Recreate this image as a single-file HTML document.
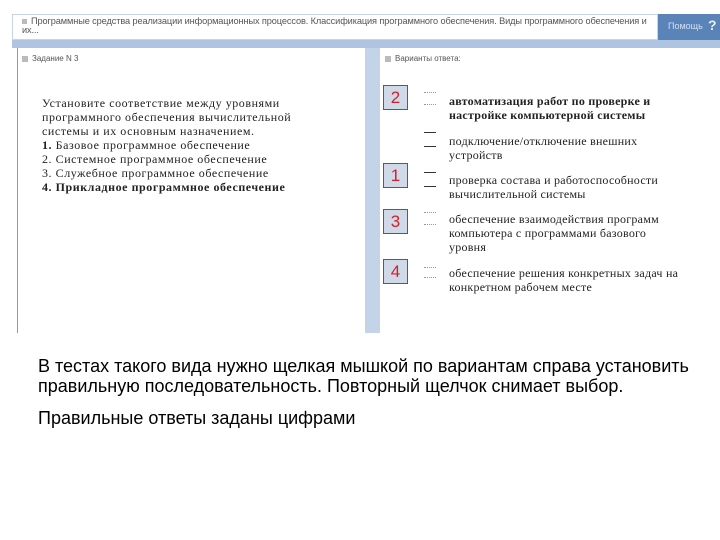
<!DOCTYPE html>
<html><head><meta charset="utf-8"><style>
body{margin:0;width:720px;height:540px;background:#fff;position:relative;overflow:hidden;font-family:"Liberation Sans",sans-serif}
.a{position:absolute}
.serif{font-family:"Liberation Serif",serif;font-size:12px;line-height:14px;color:#222;letter-spacing:0.25px;white-space:nowrap;font-weight:bold}
.box{position:absolute;left:383px;width:25px;height:25px;background:#cfd9e8;border:1px solid #8a3a8a;box-sizing:border-box;color:#d0202a;font-size:17px;text-align:center;line-height:24px}
.dash{position:absolute;left:424px;width:12px;border-top:1px dotted #999}
.sq{display:inline-block;width:6px;height:6px;background:#bbb;margin-right:4px;vertical-align:middle}
.n{font-weight:normal}
</style></head><body>
<div class="a" style="left:12px;top:14px;width:646px;height:26px;border:1px solid #c8d4e6;box-sizing:border-box;background:#fff"></div>
<div class="a" style="left:22px;top:17px;width:628px;font-size:9.2px;line-height:9px;color:#555;letter-spacing:-0.1px"><span class="sq" style="width:5px;height:5px"></span>Программные средства реализации информационных процессов. Классификация программного обеспечения. Виды программного обеспечения и их...</div>
<div class="a" style="left:658px;top:14px;width:62px;height:26px;background:#5a83b8"></div>
<div class="a" style="left:668px;top:21px;font-size:9px;color:#cfe0f5">Помощь</div>
<div class="a" style="left:708px;top:17px;font-size:14px;font-weight:bold;color:#e8eef8">?</div>
<div class="a" style="left:12px;top:40px;width:708px;height:8px;background:#aec4e0"></div>
<div class="a" style="left:17px;top:48px;width:1px;height:285px;background:#999"></div>
<div class="a" style="left:365px;top:48px;width:15px;height:285px;background:#c3d3e8"></div>
<div class="a" style="left:22px;top:54px;font-size:8px;color:#555"><span class="sq"></span>Задание N 3</div>
<div class="a" style="left:385px;top:54px;font-size:8px;color:#555"><span class="sq"></span>Варианты ответа:</div>
<div class="a serif" style="left:42px;top:96px;letter-spacing:0.55px"><span class="n">Установите соответствие между уровнями<br>программного обеспечения вычислительной<br>системы и их основным назначением.</span><br>1. <span class="n">Базовое программное обеспечение</span><br><span class="n">2. Системное программное обеспечение<br>3. Служебное программное обеспечение</span><br>4. Прикладное программное обеспечение</div>
<div class="box" style="top:85px">2</div>
<div class="box" style="top:163px">1</div>
<div class="box" style="top:209px">3</div>
<div class="box" style="top:259px">4</div>
<div class="dash" style="top:92px"></div><div class="dash" style="top:104px"></div>
<div class="dash" style="top:132px;border-top:1px solid #333"></div><div class="dash" style="top:146px;border-top:1px solid #333"></div>
<div class="dash" style="top:172px;border-top:1px solid #333"></div><div class="dash" style="top:186px;border-top:1px solid #333"></div>
<div class="dash" style="top:212px"></div><div class="dash" style="top:224px"></div>
<div class="dash" style="top:267px"></div><div class="dash" style="top:277px"></div>
<div class="a serif" style="left:449px;top:94px">автоматизация работ по проверке и<br>настройке компьютерной системы</div>
<div class="a serif n" style="left:449px;top:134px">подключение/отключение внешних<br>устройств</div>
<div class="a serif n" style="left:449px;top:173px">проверка состава и работоспособности<br>вычислительной системы</div>
<div class="a serif n" style="left:449px;top:212px">обеспечение взаимодействия программ<br>компьютера с программами базового<br>уровня</div>
<div class="a serif n" style="left:449px;top:266px">обеспечение решения конкретных задач на<br>конкретном рабочем месте</div>
<div class="a" style="left:38px;top:356px;width:680px;font-size:18px;line-height:20px;color:#000;white-space:nowrap">В тестах такого вида нужно щелкая мышкой по вариантам справа установить<br>правильную последовательность. Повторный щелчок снимает выбор.</div>
<div class="a" style="left:38px;top:408px;font-size:18px;color:#000">Правильные ответы заданы цифрами</div>
</body></html>
